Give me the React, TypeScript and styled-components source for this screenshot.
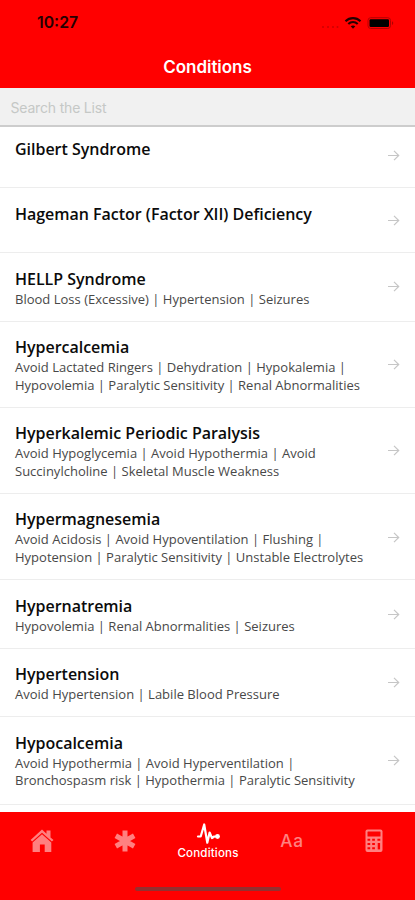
import React from "react";
import styled, { createGlobalStyle } from "styled-components";

const GlobalStyle = createGlobalStyle`
  * { box-sizing: border-box; }
  body { margin: 0; background: #fff; }
`;

const Screen = styled.div`
  width: 415px;
  height: 900px;
  display: flex;
  flex-direction: column;
  overflow: hidden;
  background: #fff;
  font-family: "Open Sans", "Noto Sans", sans-serif;
`;

const Header = styled.header`
  flex: none;
  height: 88px;
  background: #ff0000;
`;

const StatusBar = styled.div`
  height: 46px;
  padding: 0 20px 0 37px;
  display: flex;
  align-items: center;
  justify-content: space-between;
`;

const Clock = styled.span`
  font: 600 15.8px/20px Inter, sans-serif;
  letter-spacing: 0;
  color: #260000;
`;

const StatusIcons = styled.svg`
  display: block;
`;

const PageTitle = styled.h1`
  margin: 0;
  padding-top: 9px;
  text-align: center;
  font: 600 17px/24px Inter, sans-serif;
  letter-spacing: -0.05px;
  color: #fff;
`;

const SearchInput = styled.input`
  flex: none;
  height: 39px;
  width: 100%;
  padding: 1px 10.5px 0;
  border: 0;
  border-bottom: 2px solid #cdcdcd;
  border-radius: 0;
  outline: 0;
  background: #f1f1f1;
  font: 400 14px/20px Inter, sans-serif;
  letter-spacing: -0.18px;
  &::placeholder { color: #c5c8c6; opacity: 1; }
`;

const List = styled.ul`
  flex: 1;
  min-height: 0;
  margin: 0;
  padding: 0;
  list-style: none;
  overflow: hidden;
`;

const Row = styled.li<{ $height: number; $clipped?: boolean }>`
  height: ${(p) => p.$height}px;
  padding: ${(p) => (p.$clipped ? 10 : 13.5)}px 15px 0;
  display: flex;
  justify-content: space-between;
  border-bottom: 1.5px solid #ededed;
`;

const Name = styled.h2`
  margin: 0;
  font-size: 16px;
  line-height: 24px;
  font-weight: 600;
  letter-spacing: -0.02px;
  color: #0b0b0b;
  white-space: nowrap;
`;

const Cautions = styled.p`
  margin: 0;
  font-size: 13px;
  line-height: 17.7px;
  letter-spacing: 0.01px;
  color: #484848;
  white-space: pre;
`;

const Arrow = styled.svg<{ $top: number }>`
  flex: none;
  margin-top: ${(p) => p.$top}px;
`;

const TabBar = styled.nav`
  flex: none;
  height: 88px;
  display: flex;
  flex-direction: column;
  align-items: center;
  background: #ff0000;
`;

const Tabs = styled.div`
  width: 100%;
  height: 75px;
  display: grid;
  grid-template-columns: repeat(5, 1fr);
`;

const Tab = styled.div<{ $active?: boolean }>`
  padding: ${(p) => (p.$active ? 10 : 16)}px 0 0 1px;
  display: flex;
  flex-direction: column;
  align-items: center;
  color: ${(p) => (p.$active ? "#fff" : "#ff8080")};
`;

const TabLabel = styled.span`
  font: 500 11.6px/15px Inter, sans-serif;
  letter-spacing: 0.15px;
`;

const LetterIcon = styled.span`
  padding-left: 2px;
  font: 500 17.3px/26px Inter, sans-serif;
  letter-spacing: 0.8px;
`;

const HomeIndicator = styled.div`
  width: 146px;
  height: 4px;
  border-radius: 2px;
  background: #943030;
`;

interface Condition {
  name: string;
  cautions?: string;
  height: number;
  arrow: number;
  clipped?: boolean;
}

const conditions: Condition[] = [
  { name: "Gilbert Syndrome", height: 61, arrow: 12, clipped: true },
  { name: "Hageman Factor (Factor XII) Deficiency", height: 65, arrow: 12 },
  { name: "HELLP Syndrome", cautions: "Blood Loss (Excessive) | Hypertension | Seizures", height: 68.5, arrow: 13.5 },
  { name: "Hypercalcemia", cautions: "Avoid Lactated Ringers | Dehydration | Hypokalemia |\nHypovolemia | Paralytic Sensitivity | Renal Abnormalities", height: 86.2, arrow: 23 },
  { name: "Hyperkalemic Periodic Paralysis", cautions: "Avoid Hypoglycemia | Avoid Hypothermia | Avoid\nSuccinylcholine | Skeletal Muscle Weakness", height: 86.2, arrow: 23.2 },
  { name: "Hypermagnesemia", cautions: "Avoid Acidosis | Avoid Hypoventilation | Flushing |\nHypotension | Paralytic Sensitivity | Unstable Electrolytes", height: 86.2, arrow: 23.4 },
  { name: "Hypernatremia", cautions: "Hypovolemia | Renal Abnormalities | Seizures", height: 68.5, arrow: 14 },
  { name: "Hypertension", cautions: "Avoid Hypertension | Labile Blood Pressure", height: 68.5, arrow: 14 },
  { name: "Hypocalcemia", cautions: "Avoid Hypothermia | Avoid Hyperventilation |\nBronchospasm risk | Hypothermia | Paralytic Sensitivity", height: 88.2, arrow: 23.5 },
];

const HomeIcon = () => (
  <svg width="26" height="26" viewBox="0 0 26 26" fill="currentColor">
    <path d="M13 4.8 3.2 13.5l-1.6-1.6L13 1.5l4.5 4.2V2.4h4v7l3 2.6-1.6 1.5Z" />
    <path d="m13 6.2 9.3 8.2V24h-6.6v-7.5h-4.8V24H3.6v-9.6Z" />
  </svg>
);

const AsteriskIcon = () => (
  <svg width="26" height="26" viewBox="0 0 26 26" stroke="currentColor" strokeWidth="5" strokeLinejoin="round">
    <path d="M13 2.5v21M3.8 7.8l18.4 10.4M3.8 18.2 22.2 7.8" />
  </svg>
);

const PulseIcon = () => (
  <svg width="26" height="24" viewBox="0 0 26 24" fill="none" stroke="currentColor" strokeWidth="2.2" strokeLinejoin="round" strokeLinecap="round">
    <path d="M3 14.5h2.7L9.2 2.5l3.1 18.2 2.3-10.2 2.4 5.5 2.2-1.5h4" />
    <circle cx="22.5" cy="14.5" r="2.4" fill="currentColor" stroke="none" />
  </svg>
);

const CalculatorIcon = () => (
  <svg width="20" height="26" viewBox="0 0 20 26" fill="none">
    <rect x="1.5" y="1.5" width="17" height="22.5" rx="2" fill="#ff8080" />
    <rect x="3.5" y="3.5" width="13" height="5" rx="0.5" fill="#ff0000" />
    <path d="M3.5 11.7h2.7M8.2 11.7h2.7M13.4 11.7h2.9M3.5 16h2.7M8.2 16h2.7M3.5 20.3h2.7M8.2 20.3h2.7" stroke="#ff0000" strokeWidth="2.1" />
    <path d="M14.9 15v6.4" stroke="#ff0000" strokeWidth="2.4" />
  </svg>
);

export default function App() {
  return (
    <Screen>
      <GlobalStyle />
      <Header>
        <StatusBar>
          <Clock>10:27</Clock>
          <StatusIcons width="75" height="16" viewBox="0 0 75 16">
            <g fill="#cc0000">
              <circle cx="3" cy="12" r="1" /><circle cx="8" cy="12" r="1" />
              <circle cx="13" cy="12" r="1" /><circle cx="17.5" cy="12" r="1" />
            </g>
            <g fill="none" stroke="#250000" strokeWidth="2.1">
              <path d="M25.5 6.2c4.2-4.1 10.8-4.1 15 0" />
              <path d="M28.3 9c2.7-2.6 6.7-2.6 9.4 0" />
            </g>
            <path d="m33 13.8-2.3-2.5c1.4-1.2 3.2-1.2 4.6 0Z" fill="#250000" />
            <rect x="48" y="2.7" width="22.5" height="10.8" rx="2.7" fill="none" stroke="#b50000" />
            <rect x="49.5" y="4.2" width="19.5" height="7.8" rx="1.2" fill="#000" />
            <path d="M72 6.2c1.7.5 1.7 3.2 0 3.8Z" fill="#b00000" />
          </StatusIcons>
        </StatusBar>
        <PageTitle>Conditions</PageTitle>
      </Header>
      <SearchInput placeholder="Search the List" />
      <List>
        {conditions.map((c) => (
          <Row key={c.name} $height={c.height} $clipped={c.clipped}>
            <div>
              <Name>{c.name}</Name>
              {c.cautions && <Cautions>{c.cautions}</Cautions>}
            </div>
            <Arrow $top={c.arrow} width="13" height="13" viewBox="0 0 13 13" fill="none" stroke="#c6c6c6" strokeWidth="1.2">
              <path d="M1 6.5h10.5M7 1.8l4.7 4.7L7 11.2" />
            </Arrow>
          </Row>
        ))}
      </List>
      <TabBar>
        <Tabs>
          <Tab><HomeIcon /></Tab>
          <Tab><AsteriskIcon /></Tab>
          <Tab $active>
            <PulseIcon />
            <TabLabel>Conditions</TabLabel>
          </Tab>
          <Tab><LetterIcon>Aa</LetterIcon></Tab>
          <Tab><CalculatorIcon /></Tab>
        </Tabs>
        <HomeIndicator />
      </TabBar>
    </Screen>
  );
}
